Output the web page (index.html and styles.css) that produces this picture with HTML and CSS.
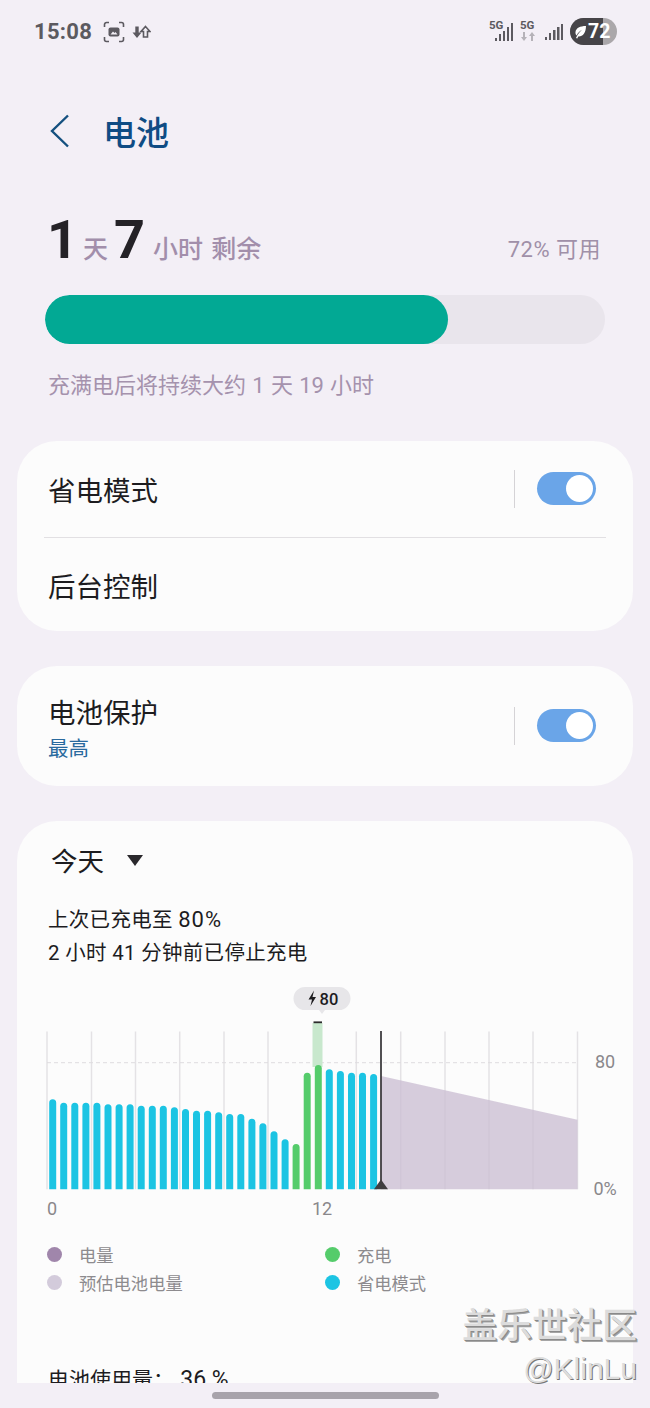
FILE: index.html
```html
<!DOCTYPE html>
<html>
  <head>
    <meta charset="utf-8" />
    <title>电池</title>
    <link rel="stylesheet" href="styles.css">
  </head>
  <body>
    <div class="screen">
      <div class="statusbar">
        <div class="status-left">
          <span class="clock">15:08</span>
          <svg class="shot-icon" width="22" height="22" viewBox="0 0 22 22">
            <path class="stroke" d="M1.5 6V3.5a2 2 0 0 1 2-2H6M16 1.5h2.500a2 2 0 0 1 2 2V6M20.500 16v2.500a2 2 0 0 1-2 2H16M6 20.500H3.500a2 2 0 0 1-2-2V16" />
            <rect class="fill" x="5.500" y="6.500" width="11" height="9" rx="2" />
            <path class="cut" d="M7.500 13.500l2.500-3 1.500 1.500 1-1 2 2.500z" />
          </svg>
          <svg class="arrows-icon" width="19" height="14" viewBox="0 0 19 14">
            <path class="fill" d="M3.300 1.500h3.400v6h2.800L5 13 .5 7.500h2.800z" />
            <path class="stroke" d="M13.500 1.500L18 6.500h-2.500V12h-4V6.500H9z" />
          </svg>
        </div>
        <div class="status-right">
          <div class="net net-main">
            <span class="net-label">5G</span>
            <svg width="24" height="24" viewBox="0 0 24 24">
              <g class="fill">
                <rect x="6" y="18" width="2" height="3" />
                <rect x="10" y="14" width="2" height="7" />
                <rect x="14" y="11" width="2" height="10" />
                <rect x="18" y="7" width="2" height="14" />
                <rect x="22" y="3" width="2" height="18" />
              </g>
            </svg>
          </div>
          <div class="net net-data">
            <span class="net-label">5G</span>
            <svg width="16" height="24" viewBox="0 0 16 24">
              <path class="faint" d="M3 12h2v5h2l-3 4-3-4h2zM11 21h2v-5h2l-3-4-3 4h2z" />
            </svg>
          </div>
          <svg class="signal" width="18" height="18" viewBox="0 0 18 18">
            <g class="fill">
              <rect x="0" y="14" width="2" height="3" />
              <rect x="4" y="10" width="2" height="7" />
              <rect x="8" y="7" width="2.500" height="10" />
              <rect x="12" y="4" width="2.500" height="13" />
              <rect x="16" y="1" width="2" height="16" />
            </g>
          </svg>
          <div class="battery">
            <div class="battery-level"></div>
            <svg class="leaf" width="14" height="14" viewBox="0 0 14 14">
              <path d="M13 1C7 1 3 3 2.500 7c-.2 1.500.3 2.700 1 3.500C5 7.500 7 6 9 5 7 6.500 5 8.500 3 13l1.300.5.900-2C9.500 12 13 8 13 1z" />
            </svg>
            <span class="battery-text">72</span>
          </div>
        </div>
      </div>

      <div class="header">
        <svg class="back" width="20" height="34" viewBox="0 0 20 34">
          <path d="M18 1.500L2 17l16 15.500" />
        </svg>
        <div class="title">电池</div>
      </div>

      <div class="summary">
        <div class="remain-row">
          <div class="remain">
            <span class="big">1</span><span class="unit">天</span><span class="big">7</span><span class="unit unit-last">小时 剩余</span>
          </div>
          <div class="available">72% 可用</div>
        </div>
        <div class="meter"><div class="meter-fill"></div></div>
        <div class="full-note">充满电后将持续大约 1 天 19 小时</div>
      </div>

      <div class="card card-modes">
        <div class="row row-first">
          <div class="row-label">省电模式</div>
          <div class="switch-wrap">
            <div class="switch"><div class="knob"></div></div>
          </div>
        </div>
        <div class="row-line"></div>
        <div class="row row-last">
          <div class="row-label">后台控制</div>
        </div>
      </div>

      <div class="card card-protect">
        <div class="protect-text">
          <div class="row-label">电池保护</div>
          <div class="row-sub">最高</div>
        </div>
        <div class="switch-wrap">
          <div class="switch"><div class="knob"></div></div>
        </div>
      </div>

      <div class="card card-usage">
        <div class="day-pick">
          <span>今天</span>
          <svg width="16" height="11" viewBox="0 0 16 11"><path d="M0 0h16L8 11z" /></svg>
        </div>
        <div class="last-charge">
          <div>上次已充电至 <span class="charge-num">80%</span></div>
          <div>2 小时 41 分钟前已停止充电</div>
        </div>

        <svg class="chart" width="616" height="235" viewBox="17 985 616 235">
          <defs>
            <clipPath id="plot"><rect x="40" y="1000" width="345" height="189.300" /></clipPath>
          </defs>

          <g class="grid">
            <path d="M47 1031.500V1189.300M91.500 1031.500V1189.300M135.500 1031.500V1189.300M179.700 1031.500V1189.300M224 1031.500V1189.300M268 1031.500V1189.300M356.300 1031.500V1189.300" />
            <path d="M400.700 1031.500V1189.300M445 1031.500V1189.300M489 1031.500V1189.300M533 1031.500V1189.300M577.500 1031.500V1189.300" />
          </g>
          <path class="limit" d="M47 1062.700H577.500" />
          <path class="estimate" d="M381 1076L577.500 1119.700V1189.300H381z" />

          <rect class="peak" x="312.500" y="1023" width="10" height="44" />
          <path class="peak-cap" d="M313.500 1022.300H322" />

          <g clip-path="url(#plot)">
            <g class="saver">
              <rect x="49.200" y="1099.300" height="130" />
              <rect x="60.200" y="1102.700" height="130" />
              <rect x="71.300" y="1102.700" height="130" />
              <rect x="82.400" y="1102.700" height="130" />
              <rect x="93.400" y="1102.700" height="130" />
              <rect x="104.500" y="1104.300" height="130" />
              <rect x="115.600" y="1104.300" height="130" />
              <rect x="126.600" y="1104.300" height="130" />
              <rect x="137.700" y="1105.700" height="130" />
              <rect x="148.800" y="1105.700" height="130" />
              <rect x="159.800" y="1105.700" height="130" />
              <rect x="170.900" y="1107.300" height="130" />
              <rect x="182" y="1109" height="130" />
              <rect x="193" y="1110.700" height="130" />
              <rect x="204.100" y="1110.700" height="130" />
              <rect x="215.200" y="1112.300" height="130" />
              <rect x="226.200" y="1114" height="130" />
              <rect x="237.300" y="1114" height="130" />
              <rect x="248.400" y="1118.700" height="130" />
              <rect x="259.400" y="1123.300" height="130" />
              <rect x="270.500" y="1131.300" height="130" />
              <rect x="281.600" y="1139.300" height="130" />
              <rect x="325.800" y="1069.300" height="130" />
              <rect x="336.900" y="1071" height="130" />
              <rect x="348" y="1072.700" height="130" />
              <rect x="359" y="1072.700" height="130" />
              <rect x="370.100" y="1074" height="130" />
            </g>
            <g class="charging">
              <rect x="292.600" y="1144" height="130" />
              <rect x="303.700" y="1072.700" height="130" />
              <rect x="314.800" y="1065" height="130" />
            </g>
          </g>

          <path class="now-line" d="M381 1031V1185" />
          <path class="now-mark" d="M381 1179.500L388 1189.300H374z" />

          <path class="tip" d="M305 987h34a11.500 11.500 0 0 1 0 23h-14l-3 4-3-4h-14a11.500 11.500 0 0 1 0-23z" />
          <path class="tip-bolt" d="M314 990.500l-5.500 9h3.500l-1.500 6.500 5.500-9h-3.500z" />
          <text class="tip-text" x="319.500" y="1004.500">80</text>

          <text class="axis" x="47" y="1215">0</text>
          <text class="axis" x="312" y="1215">12</text>
          <text class="axis" x="595" y="1068">80</text>
          <text class="axis" x="593.500" y="1194.500">0%</text>
        </svg>

        <div class="legend">
          <div class="legend-item"><span class="dot dot-level"></span>电量</div>
          <div class="legend-item"><span class="dot dot-charge"></span>充电</div>
          <div class="legend-item"><span class="dot dot-estimate"></span>预估电池电量</div>
          <div class="legend-item"><span class="dot dot-saver"></span>省电模式</div>
        </div>

        <div class="usage-line">电池使用量： <span class="usage-num">36 %</span></div>
      </div>

      <div class="home-area"><div class="home-bar"></div></div>

      <div class="watermark">
        <div class="wm-cn">盖乐世社区</div>
        <div class="wm-en">@KlinLu</div>
      </div>
    </div>
  </body>
</html>
```

FILE: styles.css
```css
* {
  box-sizing: border-box;
}

body {
  margin: 0;
  padding: 0;
  background-color: #f3eff6;
  font-family: "Roboto", "Noto Sans CJK SC", sans-serif;
}

.screen {
  position: relative;
  width: 650px;
  height: 1408px;
  overflow: hidden;
  display: flex;
  flex-direction: column;
  background-color: #f3eff6;
}

/* status bar */
.statusbar {
  height: 62px;
  flex-shrink: 0;
  display: flex;
  justify-content: space-between;
  align-items: flex-start;
  padding: 18px 33px 0 34px;
}

.status-left {
  display: flex;
  align-items: center;
  height: 27px;
}

.clock {
  font-size: 22px;
  font-weight: 700;
  color: #5c5a60;
  letter-spacing: 0.3px;
}

.shot-icon {
  margin-left: 11px;
}

.arrows-icon {
  margin-left: 7px;
}

.fill {
  fill: #5c5a60;
  stroke: none;
}

.stroke {
  fill: none;
  stroke: #5c5a60;
  stroke-width: 1.6;
}

.cut {
  fill: #f3eff6;
}

.faint {
  fill: #b5b2b8;
}

.status-right {
  display: flex;
  align-items: center;
  height: 27px;
}

.net {
  position: relative;
  height: 24px;
  margin-right: 7px;
}

.net svg {
  display: block;
}

.net-label {
  position: absolute;
  top: -1px;
  left: 0;
  font-size: 11.500px;
  line-height: 13px;
  font-weight: 700;
  color: #5c5a60;
}

.signal {
  margin-left: 2px;
  margin-right: 7px;
}

.battery {
  position: relative;
  width: 47px;
  height: 27px;
  border-radius: 14px;
  overflow: hidden;
  background-color: #aaa7aa;
  display: flex;
  align-items: center;
  padding-left: 3px;
}

.battery-level {
  position: absolute;
  top: 0;
  left: 0;
  bottom: 0;
  width: 33px;
  background-color: #464448;
}

.battery .leaf {
  position: relative;
  margin: 0 1px 0 0;
}

.leaf path {
  fill: #fff;
}

.battery-text {
  position: relative;
  font-size: 19.500px;
  font-weight: 700;
  color: #fff;
}

/* header */
.header {
  height: 56px;
  flex-shrink: 0;
  margin-top: 41px;
  display: flex;
  align-items: center;
  padding-left: 50px;
}

.back path {
  fill: none;
  stroke: #14507f;
  stroke-width: 2.4;
}

.title {
  margin-left: 33px;
  font-size: 33px;
  font-weight: 500;
  color: #0f4c84;
}

/* remaining time */
.summary {
  padding: 0 45px;
  flex-shrink: 0;
  height: 282px;
}

.remain-row {
  height: 109px;
  padding: 0 4px 0 2px;
  display: flex;
  justify-content: space-between;
  align-items: flex-end;
}

.big {
  font-size: 54px;
  line-height: 56px;
  font-weight: 700;
  color: #242227;
}

.unit {
  margin-left: 5px;
  margin-right: 6px;
  font-size: 25px;
  font-weight: 500;
  color: #a28eab;
}

.unit-last {
  margin-left: 8px;
  margin-right: 0;
  word-spacing: 2px;
}

.available {
  padding-bottom: 5px;
  font-size: 22px;
  letter-spacing: 0.5px;
  color: #a090a8;
}

.meter {
  margin-top: 27px;
  height: 49px;
  border-radius: 25px;
  background-color: #e9e5ec;
  overflow: hidden;
}

.meter-fill {
  width: 403px;
  height: 100%;
  border-radius: 25px;
  background-color: #02a994;
}

.full-note {
  margin-top: 27px;
  padding-left: 3px;
  font-size: 22px;
  line-height: 30px;
  word-spacing: 0.8px;
  color: #a592ad;
}

/* cards */
.card {
  margin-left: 17px;
  margin-right: 17px;
  background-color: #fcfcfc;
  border-radius: 40px;
  flex-shrink: 0;
}

.card-modes {
  height: 190px;
}

.row {
  display: flex;
  justify-content: space-between;
  align-items: center;
  padding: 0 37px 0 31px;
}

.row-first {
  height: 96px;
}

.row-last {
  height: 93px;
}

.row .row-label {
  padding-top: 6px;
}

.row-line {
  height: 1px;
  margin: 0 27px;
  background-color: #e2e0e3;
}

.row-label {
  font-size: 27.500px;
  line-height: 38px;
  color: #1d1c1f;
}

.switch-wrap {
  display: flex;
  align-items: center;
  height: 38px;
  padding-left: 22px;
  border-left: 1.500px solid #d5d3d6;
}

.switch {
  width: 59px;
  height: 33px;
  margin-bottom: 2px;
  padding: 3px;
  border-radius: 17px;
  background-color: #6aa5e8;
  display: flex;
  justify-content: flex-end;
}

.knob {
  width: 27px;
  height: 27px;
  border-radius: 50%;
  background-color: #fff;
}

.card-protect {
  height: 120px;
  margin-top: 35px;
  display: flex;
  justify-content: space-between;
  align-items: center;
  padding: 0 37px 0 32px;
}

.row-sub {
  margin-top: 2px;
  font-size: 20.500px;
  line-height: 28px;
  color: #2a6a9e;
}

.protect-text {
  margin-left: -1px;
  padding-top: 6px;
}

/* usage chart card */
.card-usage {
  height: 562px;
  margin-top: 35px;
  border-radius: 40px 40px 0 0;
  overflow: hidden;
  padding-top: 21px;
}

.day-pick {
  display: flex;
  align-items: center;
  padding-left: 34px;
  height: 34px;
  font-size: 26.500px;
  color: #1d1c1f;
}

.day-pick svg {
  margin-left: 23px;
  margin-top: 2px;
  fill: #2a282c;
}

.last-charge {
  margin-top: 27px;
  padding-left: 31px;
  font-size: 20.500px;
  line-height: 33px;
  letter-spacing: 0.3px;
  color: #1d1c1f;
}

.charge-num {
  font-size: 22px;
  letter-spacing: 1px;
}

.chart {
  display: block;
  margin-top: 15px;
}

.estimate {
  fill: #c9bcd1;
  opacity: 0.75;
}

.grid path {
  fill: none;
  stroke: #e4e2e5;
  stroke-width: 1.500;
}

.limit {
  fill: none;
  stroke: #dedcdf;
  stroke-width: 1;
  stroke-dasharray: 4 3;
}

.peak {
  fill: #c8e8cd;
}

.peak-cap {
  stroke: #2c2c2c;
  stroke-width: 1.800;
}

.saver rect,
.charging rect {
  width: 7px;
  rx: 3.500px;
}

.saver rect {
  fill: #1cc4e3;
}

.charging rect {
  fill: #55cc6b;
}

.now-line {
  stroke: #3f3d40;
  stroke-width: 1.800;
}

.now-mark {
  fill: #3f3d40;
}

.tip {
  fill: #e7e6e9;
}

.tip-bolt {
  fill: #1d1c1f;
}

.tip-text {
  font-size: 16.500px;
  font-weight: 500;
  fill: #1d1c1f;
}

.axis {
  font-size: 18px;
  fill: #8a888b;
}

.legend {
  display: grid;
  grid-template-columns: 278px 1fr;
  grid-auto-rows: 27.500px;
  padding-left: 30px;
  margin-top: 21px;
}

.legend-item {
  display: flex;
  align-items: center;
  font-size: 17.300px;
  color: #8d8b8e;
}

.dot {
  width: 15px;
  height: 15px;
  margin-right: 17px;
  border-radius: 50%;
}

.dot-level {
  background-color: #a086ab;
}

.dot-charge {
  background-color: #55cc6b;
}

.dot-estimate {
  background-color: #d3cbdb;
}

.dot-saver {
  background-color: #1cc4e3;
}

.usage-line {
  margin-top: 69px;
  padding-left: 31px;
  font-size: 21px;
  line-height: 30px;
  color: #1d1c1f;
}

.usage-num {
  margin-left: 1px;
  font-size: 23px;
}

/* bottom */
.home-area {
  flex: 1;
  display: flex;
  justify-content: center;
  padding-top: 9px;
}

.home-bar {
  width: 227px;
  height: 7px;
  border-radius: 4px;
  background-color: #a8a3ab;
}

.watermark {
  position: absolute;
  right: 13px;
  top: 1305px;
  text-align: right;
}

.wm-cn {
  font-size: 35px;
  line-height: 44px;
  font-weight: 500;
  color: #dcdcdc;
  text-shadow: 1px 1px 0 #8a8a8a, 2px 2px 0 #a5a5a5;
}

.wm-en {
  font-family: "Liberation Sans", sans-serif;
  font-size: 30px;
  line-height: 40px;
  color: #dddddd;
  text-shadow: 1px 1px 0 #777;
}
```
